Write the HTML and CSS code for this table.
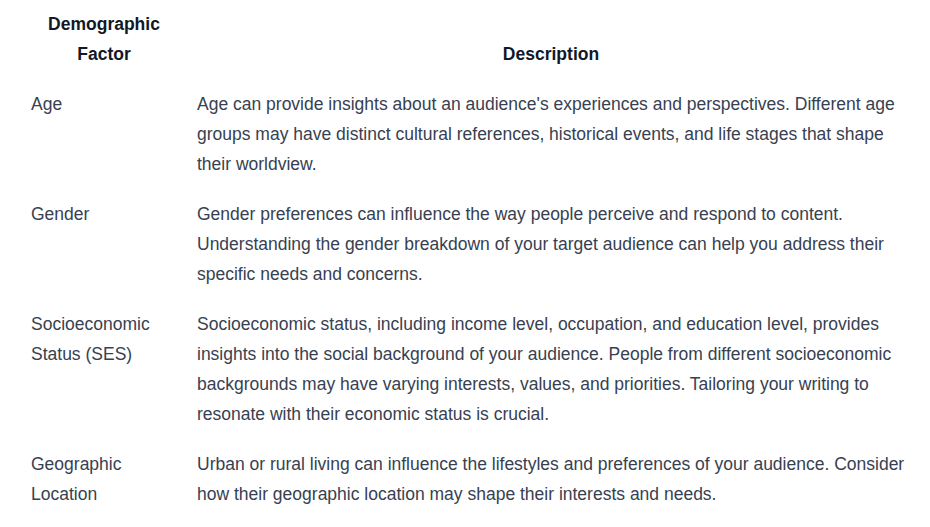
FILE: index.html
```html
<!DOCTYPE html>
<html lang="en">
<head>
<meta charset="utf-8">
<title>Demographic Factors</title>
<link rel="stylesheet" href="styles.css">
</head>
<body>
<table class="demo-table">
  <thead>
    <tr>
      <th class="col-factor">Demographic Factor</th>
      <th class="col-desc">Description</th>
    </tr>
  </thead>
  <tbody>
    <tr>
      <td>Age</td>
      <td>Age can provide insights about an audience's experiences and perspectives. Different age groups may have distinct cultural references, historical events, and life stages that shape their worldview.</td>
    </tr>
    <tr>
      <td>Gender</td>
      <td>Gender preferences can influence the way people perceive and respond to content. Understanding the gender breakdown of your target audience can help you address their specific needs and concerns.</td>
    </tr>
    <tr>
      <td>Socioeconomic Status (SES)</td>
      <td>Socioeconomic status, including income level, occupation, and education level, provides insights into the social background of your audience. People from different socioeconomic backgrounds may have varying interests, values, and priorities. Tailoring your writing to resonate with their economic status is crucial.</td>
    </tr>
    <tr>
      <td>Geographic Location</td>
      <td>Urban or rural living can influence the lifestyles and preferences of your audience. Consider how their geographic location may shape their interests and needs.</td>
    </tr>
  </tbody>
</table>
</body>
</html>
```
FILE: styles.css
```css
html, body {
  margin: 0;
  padding: 0;
  background: #ffffff;
}
body {
  font-family: "Liberation Sans", Arial, sans-serif;
  font-size: 17.5px;
  line-height: 30px;
  color: #374151;
}
.demo-table {
  border-collapse: collapse;
  margin: -1px 0 0 21px;
  table-layout: fixed;
  width: 894px;
}
.col-factor { width: 146px; }
.demo-table th,
.demo-table td {
  padding: 10px 10px;
}
.demo-table th {
  color: #111827;
  font-weight: 700;
  text-align: center;
  vertical-align: bottom;
}
.demo-table td {
  text-align: left;
  vertical-align: top;
}
```
